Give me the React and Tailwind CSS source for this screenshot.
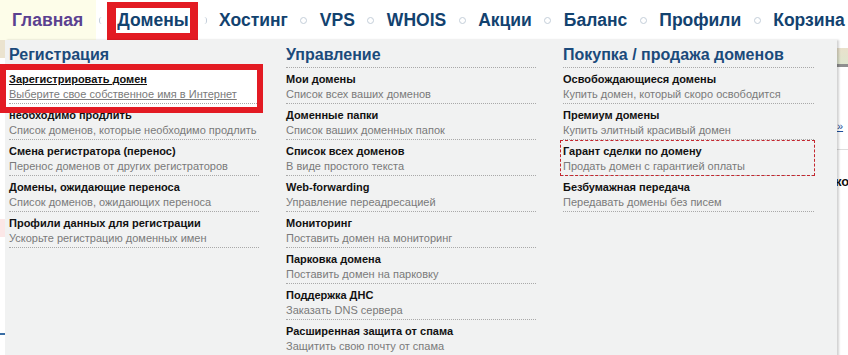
import React from 'react';

const navItems = ['Хостинг', 'VPS', 'WHOIS', 'Акции', 'Баланс', 'Профили', 'Корзина'];

const columns = [
  {
    title: 'Регистрация',
    items: [
      { name: 'Зарегистрировать домен', desc: 'Выберите свое собственное имя в Интернет', hover: true },
      { name: 'необходимо продлить', desc: 'Список доменов, которые необходимо продлить' },
      { name: 'Смена регистратора (перенос)', desc: 'Перенос доменов от других регистраторов' },
      { name: 'Домены, ожидающие переноса', desc: 'Список доменов, ожидающих переноса' },
      { name: 'Профили данных для регистрации', desc: 'Ускорьте регистрацию доменных имен' },
    ],
  },
  {
    title: 'Управление',
    items: [
      { name: 'Мои домены', desc: 'Список всех ваших доменов' },
      { name: 'Доменные папки', desc: 'Список ваших доменных папок' },
      { name: 'Список всех доменов', desc: 'В виде простого текста' },
      { name: 'Web-forwarding', desc: 'Управление переадресацией' },
      { name: 'Мониторинг', desc: 'Поставить домен на мониторинг' },
      { name: 'Парковка домена', desc: 'Поставить домен на парковку' },
      { name: 'Поддержка ДНС', desc: 'Заказать DNS сервера' },
      { name: 'Расширенная защита от спама', desc: 'Защитить свою почту от спама' },
    ],
  },
  {
    title: 'Покупка / продажа доменов',
    items: [
      { name: 'Освобождающиеся домены', desc: 'Купить домен, который скоро освободится' },
      { name: 'Премиум домены', desc: 'Купить элитный красивый домен' },
      { name: 'Гарант сделки по домену', desc: 'Продать домен с гарантией оплаты', focus: true },
      { name: 'Безбумажная передача', desc: 'Передавать домены без писем' },
    ],
  },
];

const Sep = ({ side }) => {
  if (side === 'left') return <span className="block w-[6px] h-[7px] rounded-full border-l border-[#c3ced9]" />;
  if (side === 'right') return <span className="block w-[6px] h-[7px] rounded-full border-r border-[#c3ced9]" />;
  return <span className="block w-[7px] h-[7px] rounded-full border border-[#c3ced9]" />;
};

const MenuItem = ({ item }) => (
  <div className="relative border-b border-dotted border-[#a9a9a9] pt-[4px] pb-[2px]">
    {item.focus && (
      <div className="absolute left-[-3px] right-[-1px] top-[0px] bottom-[-1px] border border-dashed border-[#c4262e]" />
    )}
    <div className={`text-[11px] leading-[14px] font-bold text-[#111] ${item.hover ? 'underline' : ''}`}>{item.name}</div>
    <div className={`mt-[1px] text-[11px] leading-[14px] text-[#7a7a7a] ${item.hover ? 'underline' : ''}`}>{item.desc}</div>
  </div>
);

const App = () => {
  return (
    <div
      className="relative w-[848px] h-[355px] overflow-hidden bg-white"
      style={{ fontFamily: '"Liberation Sans", Arial, sans-serif' }}
    >
      {/* top navigation */}
      <div className="flex items-center h-10 text-[17.5px] font-bold text-[#12426f]">
        <span className="w-[96px] shrink-0 h-10 flex items-center pl-3 bg-[#fdfde9] text-[#5b4190]">Главная</span>
        <span className="w-[11px] shrink-0 flex justify-center"><Sep side="left" /></span>
        <span className="w-[91px] shrink-0 h-[38px] mt-[1px] flex items-center justify-center border-[#e31b23] border-l-[9px] border-r-[8px] border-t-[6px] border-b-[7px] bg-white">
          Домены
        </span>
        <span className="ml-[3px] flex"><Sep side="right" /></span>
        <div className="ml-[12px] flex items-center gap-[12.5px]">
          {navItems.map((n, i) => (
            <React.Fragment key={n}>
              {i > 0 && <Sep />}
              <span className="whitespace-nowrap">{n}</span>
            </React.Fragment>
          ))}
        </div>
      </div>

      {/* page content partly hidden by the menu */}
      <div className="flex justify-between h-[315px]">
        <div className="w-[5px] flex flex-col">
          <div className="h-[18px] bg-[#ebe3cf]" />
          <div className="h-[42px]" />
          <div className="h-[1px] bg-[#aaa]" />
          <div className="h-[118px]" />
          <div className="h-[18px] bg-[#fbe7e7]" />
          <div className="h-[96px]" />
          <div className="h-[2px] bg-[#3a6ea5]" />
        </div>
        <div className="w-[11px] flex flex-col">
          <div className="h-[8px]" />
          <div className="h-[16px] bg-gradient-to-b from-[#e9e1cc] to-[#dfe6cf]" />
          <div className="h-[3px] bg-[#8f8f8f]" />
          <div className="h-[52px]" />
          <div className="text-[11px] leading-[14px] text-[#1d4f9c] underline">»</div>
          <div className="h-[16px]" />
          <div className="h-[1px] bg-[#ddd]" />
          <div className="h-[24px]" />
          <div className="text-[13px] leading-[16px] font-bold text-[#111] -ml-[2px]">ко</div>
        </div>
      </div>

      {/* dropdown menu */}
      <div className="absolute top-10 left-[5px] w-[832px] h-[320px] bg-[#f1f2f2] shadow-[2px_0_2px_rgba(0,0,0,0.18)]">
        {/* hover fill behind the first item */}
        <div className="absolute left-[1px] top-[30px] w-[251px] h-[37px] bg-white" />

        <div className="relative grid grid-cols-[250px_250px_251px] gap-x-[27px] pl-[4px] pt-[5px]">
          {columns.map((col) => (
            <div key={col.title}>
              <div className="h-[23px] text-[16px] leading-[20px] font-bold text-[#1b4a7b] border-b border-dotted border-[#a9a9a9]">
                {col.title}
              </div>
              {col.items.map((item) => (
                <MenuItem key={item.name} item={item} />
              ))}
            </div>
          ))}
        </div>

        {/* annotation box around the hovered item */}
        <div className="absolute left-[-5px] top-[24px] w-[263px] h-[49px] border-[6px] border-[#e31b23]" />
      </div>
    </div>
  );
};

export default App;
